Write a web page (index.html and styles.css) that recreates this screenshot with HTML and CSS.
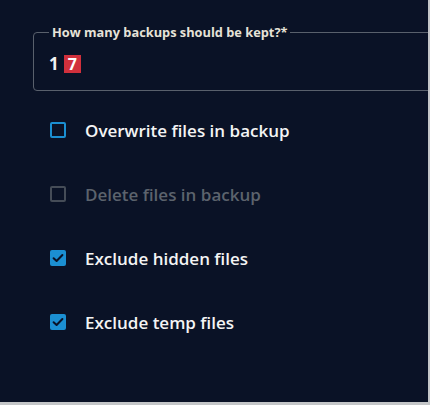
FILE: index.html
```html
<!DOCTYPE html>
<html>
<head>
  <meta charset="UTF-8" />
  <title>Backup settings</title>
  <link rel="stylesheet" href="styles.css">
</head>
<body>
<div class="panel">
  <!-- Number of backups -->
  <fieldset class="field">
    <legend>How many backups should be kept?*</legend>
    <div class="value">1 <span class="mark">7</span></div>
  </fieldset>

  <!-- Options -->
  <div class="options">
    <label class="option">
      <span class="box"></span>
      <span class="text">Overwrite files in backup</span>
    </label>
    <label class="option disabled">
      <span class="box"></span>
      <span class="text">Delete files in backup</span>
    </label>
    <label class="option">
      <span class="box checked">
        <svg viewBox="0 0 16 16" width="16" height="16"><path d="M3.6 8.2 L6.6 11 L12.4 5" fill="none" stroke="#0a1226" stroke-width="2" stroke-linecap="round" stroke-linejoin="round"/></svg>
      </span>
      <span class="text">Exclude hidden files</span>
    </label>
    <label class="option">
      <span class="box checked">
        <svg viewBox="0 0 16 16" width="16" height="16"><path d="M3.6 8.2 L6.6 11 L12.4 5" fill="none" stroke="#0a1226" stroke-width="2" stroke-linecap="round" stroke-linejoin="round"/></svg>
      </span>
      <span class="text">Exclude temp files</span>
    </label>
  </div>
</div>
</body>
</html>
```

FILE: styles.css
```css
body {
  margin: 0;
  background-color: #c4c6c8;
  font-family: "Open Sans", "Noto Sans", sans-serif;
}
.panel {
  width: 428px;
  height: 402px;
  background-color: #0a1226;
  overflow: hidden;
  padding-top: 25px;
  box-sizing: border-box;
}
/* Outlined number field, runs past the right edge */
.field {
  margin: 0 0 0 33px;
  width: 440px;
  height: 66px;
  box-sizing: border-box;
  border: 1px solid #59606c;
  border-radius: 4px;
  padding: 0 0 0 15px;
}
.field legend {
  padding: 0 3px;
  margin-left: 0;
  font-size: 12.8px;
  line-height: 14px;
  font-weight: 700;
  color: #e6e2d8;
}
.value {
  margin-top: 13px;
  font-size: 17px;
  font-weight: 700;
  color: #f2f2f2;
  display: flex;
  align-items: center;
  gap: 5px;
}
.mark {
  display: inline-block;
  background-color: #d1303c;
  color: #ffffff;
  width: 17px;
  height: 18px;
  line-height: 18px;
  font-size: 16px;
  text-align: center;
}
.options {
  display: flex;
  flex-direction: column;
  gap: 40px;
  padding: 27px 0 0 50px;
}
.option {
  display: flex;
  align-items: center;
  gap: 19px;
  height: 24px;
  font-size: 17px;
  font-weight: 600;
  color: #f4f4f4;
}
.box {
  width: 16px;
  height: 16px;
  box-sizing: border-box;
  border: 2px solid #1b8fd2;
  border-radius: 2px;
  display: flex;
}
.box.checked {
  background-color: #1b8fd2;
  border: none;
}
.disabled {
  color: #5c636d;
}
.disabled .box {
  border-color: #454c57;
}
```
